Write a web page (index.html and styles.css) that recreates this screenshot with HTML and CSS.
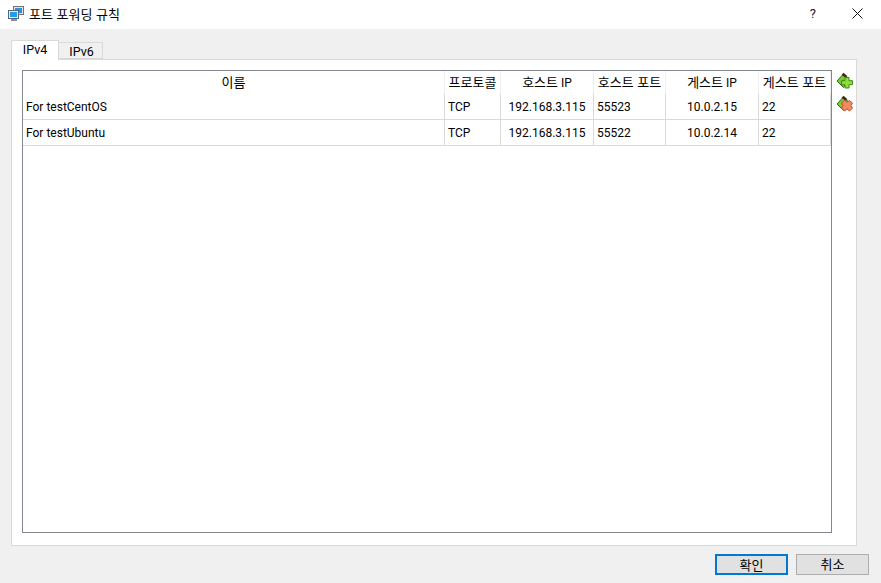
FILE: index.html
```html
<!DOCTYPE html>
<html lang="ko">
<head>
<meta charset="utf-8">
<title>포트 포워딩 규칙</title>
<link rel="stylesheet" href="styles.css">
</head>
<body>
<div class="dialog">
  <header class="titlebar">
    <svg class="app-icon" width="16" height="16" viewBox="0 0 16 16">
      <rect x="5.5" y="0.5" width="10" height="8" fill="#dfe3ea" stroke="#6b7280"/>
      <rect x="7" y="2" width="7" height="5" fill="#2f8fe0"/>
      <rect x="0.5" y="4.5" width="10" height="8" fill="#e8ebf0" stroke="#5b6470"/>
      <rect x="2" y="6" width="7" height="5" fill="#1e9cf0"/>
      <rect x="3" y="13" width="6" height="2" fill="#8a9099"/>
    </svg>
    <span class="title ko">포트 포워딩 규칙</span>
    <span class="help">?</span>
    <svg class="close" width="11" height="11" viewBox="0 0 11 11"><path d="M0.5 0.5L10.5 10.5M10.5 0.5L0.5 10.5" stroke="#111" stroke-width="1" fill="none"/></svg>
  </header>
  <main class="content">
    <nav class="tabs">
      <span class="tab active">IPv4</span>
      <span class="tab">IPv6</span>
    </nav>
    <section class="panel">
      <div class="table">
        <div class="row head">
          <span class="c c1 ctr"><span class="ko">이름</span></span>
          <span class="c c2 ctr"><span class="ko">프로토콜</span></span>
          <span class="c c3 ctr"><span class="ko">호스트</span> IP</span>
          <span class="c c4 ctr"><span class="ko">호스트 포트</span></span>
          <span class="c c5 ctr"><span class="ko">게스트</span> IP</span>
          <span class="c c6 ctr"><span class="ko">게스트 포트</span></span>
        </div>
        <div class="row">
          <span class="c c1">For testCentOS</span>
          <span class="c c2">TCP</span>
          <span class="c c3 ctr">192.168.3.115</span>
          <span class="c c4">55523</span>
          <span class="c c5 ctr">10.0.2.15</span>
          <span class="c c6">22</span>
        </div>
        <div class="row">
          <span class="c c1">For testUbuntu</span>
          <span class="c c2">TCP</span>
          <span class="c c3 ctr">192.168.3.115</span>
          <span class="c c4">55522</span>
          <span class="c c5 ctr">10.0.2.14</span>
          <span class="c c6">22</span>
        </div>
      </div>
      <aside class="tools">
        <svg width="18" height="18" viewBox="0 0 18 18">
          <path d="M1 9L7 2.5L13 7L7.5 15.5Z" fill="#7cc832" stroke="#2f6d12" stroke-width="1"/>
          <path d="M5.5 3L7.5 0.8L11.5 4.2L9.5 5.5Z" fill="#3a2a20"/>
          <path d="M9 5.5h4v3.2h3.5v4H13V16H9v-3.3H5.5v-4H9Z" fill="#8fdc3c" stroke="#3f8a14" stroke-width="1"/>
        </svg>
        <svg width="18" height="18" viewBox="0 0 18 18">
          <path d="M1 9L7 2.5L13 7L7.5 15.5Z" fill="#7cc832" stroke="#2f6d12" stroke-width="1"/>
          <path d="M5.5 3L7.5 0.8L11.5 4.2L9.5 5.5Z" fill="#3a2a20"/>
          <path d="M8.5 5.5L11 7.2L13.5 5.5L16.5 8L15 10.5L16.5 13L13.5 16L11 14L8.5 16L5.5 13L7 10.5L5.5 8Z" fill="#f08a60" stroke="#c8502c" stroke-width="1"/>
        </svg>
      </aside>
    </section>
    <footer class="buttons">
      <button class="btn primary"><span class="ko">확인</span></button>
      <button class="btn"><span class="ko">취소</span></button>
    </footer>
  </main>
</div>
</body>
</html>
```
FILE: styles.css
```css
* { box-sizing: border-box; }
html, body { margin: 0; padding: 0; }
body {
  width: 881px;
  height: 583px;
  overflow: hidden;
  background: #f0f0f0;
  color: #000;
  font: 12px/16px Roboto, "Noto Sans CJK KR", sans-serif;
}
.ko { font-family: "Noto Sans CJK KR", sans-serif; font-size: 13px; }
.dialog { display: flex; flex-direction: column; height: 583px; }
.titlebar {
  height: 29px;
  background: #fff;
  display: flex;
  align-items: center;
  padding: 0 18px 2px 8px;
}
.app-icon { flex: none; }
.title { margin-left: 5px; }
.help { margin-left: auto; margin-right: 36px; font-size: 13px; color: #222; }
.close { flex: none; }
.content {
  flex: 1;
  display: flex;
  flex-direction: column;
  padding: 11px 24px 0 11px;
}
.tabs { display: flex; align-items: flex-end; height: 19px; position: relative; z-index: 1; }
.tab {
  height: 17px;
  width: 44px;
  padding-left: 2px;
  background: #f0f0f0;
  border: 1px solid #d9d9d9;
  border-left: 0;
  text-align: center;
  font-size: 12.5px;
  line-height: 17px;
}
.tab.active {
  height: 20px;
  width: 48px;
  padding-left: 0;
  background: #fff;
  border-left: 1px solid #d9d9d9;
  border-bottom: 0;
  margin-bottom: -1px;
}
.panel {
  width: 846px;
  height: 487px;
  background: #fff;
  border: 1px solid #d9d9d9;
  padding: 10px 0 11px 10px;
  display: flex;
}
.table {
  width: 810px;
  height: 463px;
  border: 1px solid #828790;
  flex: none;
}
.row { display: flex; height: 26px; border-bottom: 1px solid #d9d9d9; }
.row.head { height: 23px; border-bottom: 0; }
.c {
  display: block;
  padding-left: 3px;
  line-height: 26px;
  border-right: 1px solid #d9d9d9;
  white-space: nowrap;
  overflow: hidden;
}
.head .c { border-right-color: #f0f0f0; line-height: 22px; }
.ctr { text-align: center; padding-left: 0; }
.c1 { width: 422px; }
.c2 { width: 56px; }
.c3 { width: 93px; }
.c4 { width: 72px; }
.c5 { width: 93px; }
.c6 { width: 72px; }
.head .c2, .head .c4, .head .c6 { padding: 0; }
.tools {
  display: flex;
  flex-direction: column;
  gap: 5px;
  padding: 2px 0 0 4px;
}
.tools svg { display: block; }
.buttons {
  display: flex;
  justify-content: flex-end;
  gap: 8px;
  margin-top: 8px;
  margin-right: -12px;
}
.btn {
  width: 73px;
  height: 21px;
  padding: 0 0 2px;
  background: #e1e1e1;
  border: 1px solid #adadad;
  border-radius: 0;
  font: inherit;
  line-height: 17px;
  color: #000;
}
.btn.primary { border: 2px solid #0078d7; }
```
